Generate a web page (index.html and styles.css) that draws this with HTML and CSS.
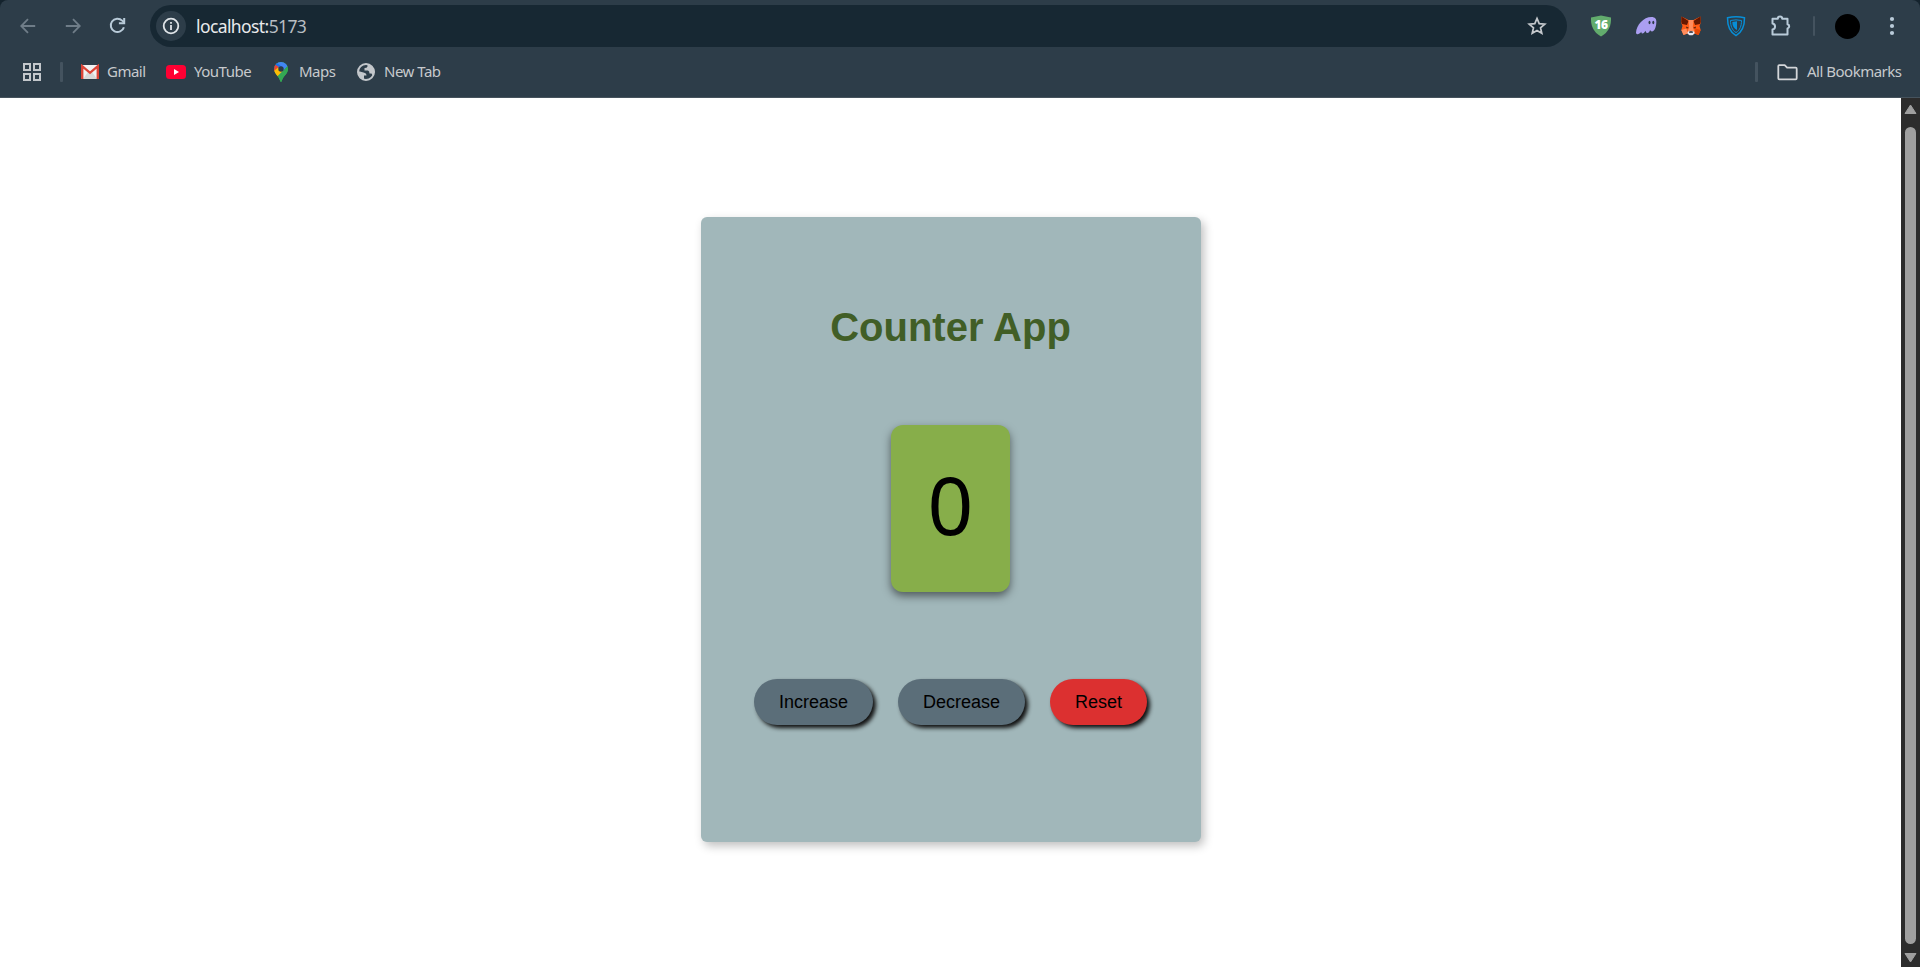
FILE: index.html
```html
<!DOCTYPE html>
<html lang="en">
<head>
<meta charset="utf-8">
<title>Counter App</title>
<link rel="stylesheet" href="styles.css">
</head>
<body>
<div class="frame">
<header class="browser">
  <div class="toolbar">
    <div class="nav">
      <svg class="dim" width="16" height="16" viewBox="0 0 16 16"><path d="M15.2 8H1.4M8 1.1L1.200 8L8 14.9"/></svg>
      <svg class="dim" width="16" height="16" viewBox="0 0 16 16"><path d="M.8 8H14.6M8 1.1L14.8 8L8 14.9"/></svg>
      <svg class="reload" width="17" height="17" viewBox="0 0 17 17"><path d="M14.9 10.2A6.7 6.7 0 1 1 13.2 3.6L15 5.4"/><path d="M15.2 1V6.3H9.9"/></svg>
    </div>
    <div class="omnibox">
      <span class="info"><svg width="18" height="18" viewBox="0 0 18 18"><circle cx="9" cy="9" r="7.3"/><path d="M9 8V13M9 5V6.8"/></svg></span>
      <span class="url">localhost:<span class="port">5173</span></span>
      <svg class="star" width="20" height="20" viewBox="0 0 20 20"><path d="M10 2.4L12.2 7.6L17.8 8.1L13.5 11.8L14.8 17.3L10 14.4L5.2 17.3L6.500 11.8L2.2 8.1L7.8 7.6Z"/></svg>
    </div>
    <div class="extensions">
      <svg width="22" height="22" viewBox="0 0 22 22"><path fill="#62ac6d" d="M11 .5L21 2.500C21.500 10.500 18.500 17.500 11 21.500C3.500 17.500 .5 10.500 1 2.500Z"/><text class="badge" x="11" y="14">16</text></svg>
      <svg width="22" height="22" viewBox="0 0 22 22"><path fill="#ab9ff2" d="M1 17.500C1.500 10 8.500 2 16.500 2C20 2 21.800 4 21.300 8C21 12.500 19.300 16.500 17 16.500C15.800 16.500 15.500 15.500 15.100 15C14.500 16.700 13.600 18 12.300 18C11 18 10.800 16.800 10.600 15.700C9.500 17 8.600 18.500 7.300 18.500C6.400 18.500 6.300 17.700 6.500 16.800C5 18.500 3.500 19.300 2.300 19.200C1.300 19 1 18.400 1 17.500Z"/><ellipse cx="14.500" cy="7.500" rx="1" ry="1.700" fill="#2d3b48"/><ellipse cx="18.300" cy="7.500" rx="1" ry="1.700" fill="#2d3b48"/></svg>
      <svg width="22" height="22" viewBox="0 0 22 22"><path fill="#ff5c16" d="M1.500 1.500L8.500 5H13.500L20.500 1.500L20.700 8L19.500 11L20.700 15L18.500 20L14.500 18.500L12.500 20H9.500L7.500 18.500L3.500 20L1.300 15L2.500 11L1.300 8Z"/><path fill="#661800" d="M1.500 1.500L8.500 6L7 10L2 9L1.300 7ZM20.500 1.500L13.500 6L15 10L20 9L20.700 7Z"/><path fill="#ff8d5d" d="M8.500 5H13.500L12.800 12L14.500 17H7.500L9.200 12ZM1.300 15L6.500 13.500L7.500 18.500L3.500 20Z"/><path fill="#e34807" d="M15.500 13.500L20.700 15L18.500 20L14.500 18.500Z"/><path fill="#3a160b" d="M6 11.500L9 13L6.700 13.500ZM16 11.500L13 13L15.300 13.500Z"/><path fill="#e7ebf6" d="M7.500 17L9.500 16H12.500L14.500 17V18.500L12.500 20.200H9.500L7.500 18.500Z"/><path fill="#201c20" d="M9.500 16.300H12.500L13 17.700H9Z"/></svg>
      <svg width="22" height="22" viewBox="0 0 22 22"><path class="guard" d="M2.500 2.800Q11 .8 19.500 2.800C19.600 11 17.500 17 11 20.700C4.500 17 2.400 11 2.500 2.800Z"/><path class="guard inner" d="M5.500 5.500Q11 4.200 16.500 5.500C16.500 11 15 15 11 17.600C7 15 5.500 11 5.500 5.500Z"/><path fill="#078fd8" d="M7.300 7L12 6.300V15C9 13.500 7.300 11 7.300 7Z"/></svg>
      <svg class="puzzle" width="22" height="22" viewBox="0 0 22 22"><path d="M2.500 3.800H7.800A2.200 2.200 0 0 1 12.200 3.800H17.500V9.200A2.200 2.200 0 0 1 17.500 13.500V19.500H2.500V14.600A3.100 3.100 0 0 0 2.500 8.500Z"/></svg>
    </div>
    <span class="divider thin"></span>
    <span class="avatar"></span>
    <svg class="dots" width="6" height="20" viewBox="0 0 6 20"><circle cx="3" cy="3" r="2.100"/><circle cx="3" cy="10" r="2.100"/><circle cx="3" cy="17" r="2.100"/></svg>
  </div>
  <div class="bookmarks">
    <svg class="apps" width="18" height="18" viewBox="0 0 18 18"><path d="M1 1H7V7H1ZM11 1H17V7H11ZM1 11H7V17H1ZM11 11H17V17H11Z"/></svg>
    <span class="divider"></span>
    <span class="bookmark gmail"><svg width="20" height="16" viewBox="0 0 20 16"><rect x="1" y="1" width="18" height="14" rx="1" fill="#f2f2f2"/><path fill="#d9d9d9" d="M3 15L8 8L10 10L12 8L17 15Z"/><path fill="none" stroke="#dc4437" stroke-width="2.400" d="M2.200 15V2.200L10 8.800L17.800 2.200V15"/></svg><span>Gmail</span></span>
    <span class="bookmark youtube"><svg width="20" height="14" viewBox="0 0 20 14"><rect width="20" height="14" rx="3.500" fill="#ff0033"/><path fill="#fff" d="M8 4L13 7L8 10Z"/></svg><span>YouTube</span></span>
    <span class="bookmark maps"><svg width="14" height="20" viewBox="0 0 14 20"><defs><clipPath id="pin"><path d="M7 0A7 7 0 0 1 14 7C14 12 9 14 7.700 19.200Q7 20.500 6.300 19.200C5 14 0 12 0 7A7 7 0 0 1 7 0Z"/></clipPath></defs><g clip-path="url(#pin)"><path fill="#34a853" d="M0 0H14V20H0Z"/><path fill="#4285f4" d="M2 0H14V4L5 14L2 8Z"/><path fill="#1a73e8" d="M2 0L8 5L4 9L0 4Z"/><path fill="#ea4335" d="M0 2L5 5L0 10Z"/><path fill="#fbbc04" d="M0 9L4 5.500L9 9L3 15Z"/><path fill="#34a853" d="M14 3.500L3 15V20H14Z"/></g><circle cx="7" cy="7" r="2.700" fill="#2c3b48"/></svg><span>Maps</span></span>
    <span class="bookmark newtab"><svg width="18" height="18" viewBox="0 0 18 18"><circle cx="9" cy="9" r="8" fill="none" stroke="#c3c7cb" stroke-width="2"/><path fill="#c3c7cb" d="M1 8L6.500 9.500Q9.500 10 9.500 12.500H7V17L3 15ZM10.500 1.500V3.500Q10 5 7.500 5V7.500H11Q12.500 8 12.500 10.500H14.500L16 13L17.500 9Q17.500 3 10.500 1.500Z"/></svg><span>New Tab</span></span>
    <span class="divider right"></span>
    <span class="bookmark all"><svg width="21" height="17" viewBox="0 0 21 17"><path fill="none" stroke="#d3d6d9" stroke-width="1.800" stroke-linejoin="round" d="M1.300 2Q1.300 1.200 2.200 1.200H7.700L10.100 3.700H18.700Q19.700 3.700 19.700 4.700V14.300Q19.700 15.300 18.700 15.300H2.300Q1.300 15.300 1.300 14.300Z"/></svg><span>All Bookmarks</span></span>
  </div>
</header>
<div class="viewport">
  <main class="page">
    <section class="card">
      <h1 class="title">Counter App</h1>
      <div class="count">0</div>
      <div class="buttons">
        <button class="button">Increase</button>
        <button class="button">Decrease</button>
        <button class="button reset">Reset</button>
      </div>
    </section>
  </main>
  <div class="scrollbar">
    <svg width="13" height="11" viewBox="0 0 13 11"><path d="M6.500 1L12 9.500H1Z"/></svg>
    <span class="thumb"></span>
    <svg width="13" height="11" viewBox="0 0 13 11"><path d="M1 1.500H12L6.500 10Z"/></svg>
  </div>
</div>
</div>
</body>
</html>
```
FILE: styles.css
```css
* { box-sizing: border-box; }
body { margin: 0; background: #14232d; }
svg { display: block; flex: none; }
.frame { height: 967px; display: flex; flex-direction: column; overflow: hidden; }

.browser { height: 98px; flex: none; background: #2d3d49; border-bottom: 1px solid #46535d; border-radius: 8px 8px 0 0; font-family: "Noto Sans", sans-serif; color: #c7cacd; }
.toolbar { height: 52px; display: flex; align-items: center; }
.nav { width: 150px; flex: none; display: flex; gap: 29px; padding: 0 0 1px 20px; align-items: center; }
.nav svg { fill: none; stroke: #6f7d88; stroke-width: 1.8; }
.nav .reload { stroke: #b9cbd9; stroke-width: 2; margin-left: -1px; }
.omnibox { width: 1417px; height: 42px; flex: none; border-radius: 21px; background: #172833; display: flex; align-items: center; padding: 0 20px 0 6px; }
.info { width: 30px; height: 30px; border-radius: 50%; background: #2d3d49; display: grid; place-items: center; }
.info svg { fill: none; stroke: #dfe4e8; stroke-width: 1.8; }
.url { margin-left: 10px; font-size: 17.5px; letter-spacing: -0.6px; color: #e8eaec; }
.port { color: #b7bdc2; }
.star { margin-left: auto; fill: none; stroke: #c4c8cc; stroke-width: 1.7; }
.extensions { display: flex; gap: 23px; margin-left: 23px; flex: none; }
.badge { font: 800 12px "Open Sans", sans-serif; letter-spacing: -0.5px; fill: #fff; text-anchor: middle; }
.guard { fill: none; stroke: #078fd8; stroke-width: 1.5; }
.guard.inner { stroke-width: 1; }
.puzzle path { fill: none; stroke: #b9cbd9; stroke-width: 2; stroke-linejoin: round; }
.divider { width: 3px; height: 20px; flex: none; border-radius: 1px; background: #44535f; margin-left: 19px; }
.divider.thin { width: 2px; margin-left: 21px; }
.avatar { width: 25px; height: 25px; flex: none; border-radius: 50%; background: #000; margin-left: 20px; }
.dots { margin-left: 29px; fill: #b9cbd9; }

.bookmarks { height: 40px; display: flex; align-items: center; padding-left: 23px; font-size: 15px; white-space: nowrap; }
.apps { fill: none; stroke: #c3c7cb; stroke-width: 2; }
.bookmark { display: flex; align-items: center; flex: none; letter-spacing: -0.5px; }
.bookmark span { padding-bottom: 2px; }
.gmail { width: 86px; gap: 7px; margin-left: 17px; }
.youtube { width: 108px; gap: 8px; }
.maps { width: 83px; gap: 11px; }
.newtab { gap: 9px; }
.divider.right { margin-left: auto; }
.all { width: 143px; gap: 9px; margin-left: 19px; }

.viewport { flex: 1; display: flex; min-height: 0; background: #fff; }
.page { flex: 1; display: flex; justify-content: center; padding: 119px 0 0 1px; }
.card { width: 500px; height: 625px; padding-right: 1px; border-radius: 6px; background: #a1b7ba; box-shadow: 3px 4px 10px rgba(0, 0, 0, .25); display: flex; flex-direction: column; align-items: center; font-family: "Liberation Sans", Arial, sans-serif; }
.title { margin: 87px 0 0; font-size: 40px; line-height: 46px; color: #415e26; }
.count { width: 119px; height: 167px; margin-top: 75px; border-radius: 12px; background: #87ae4a; box-shadow: 0 4px 9px rgba(0, 0, 0, .5); font: 80px/158px "Noto Sans", sans-serif; text-align: center; color: #000; }
.buttons { display: flex; gap: 25px; margin-top: 87px; }
.button { height: 46px; padding: 0 25px; border: 0; border-radius: 23px; background: #5b6e79; box-shadow: 3px 3px 4px #111; font: 18px "Liberation Sans", Arial, sans-serif; color: #000; }
.reset { background: #dc3030; }

.scrollbar { width: 19px; flex: none; background: #2c2c2c; display: flex; flex-direction: column; align-items: center; padding: 6px 0 4px; }
.scrollbar svg { fill: #9f9f9f; stroke: #9f9f9f; stroke-width: 1; stroke-linejoin: round; }
.thumb { width: 11px; flex: 1; margin: 12px 0 8px; border-radius: 6px; background: #9f9f9f; }
```
